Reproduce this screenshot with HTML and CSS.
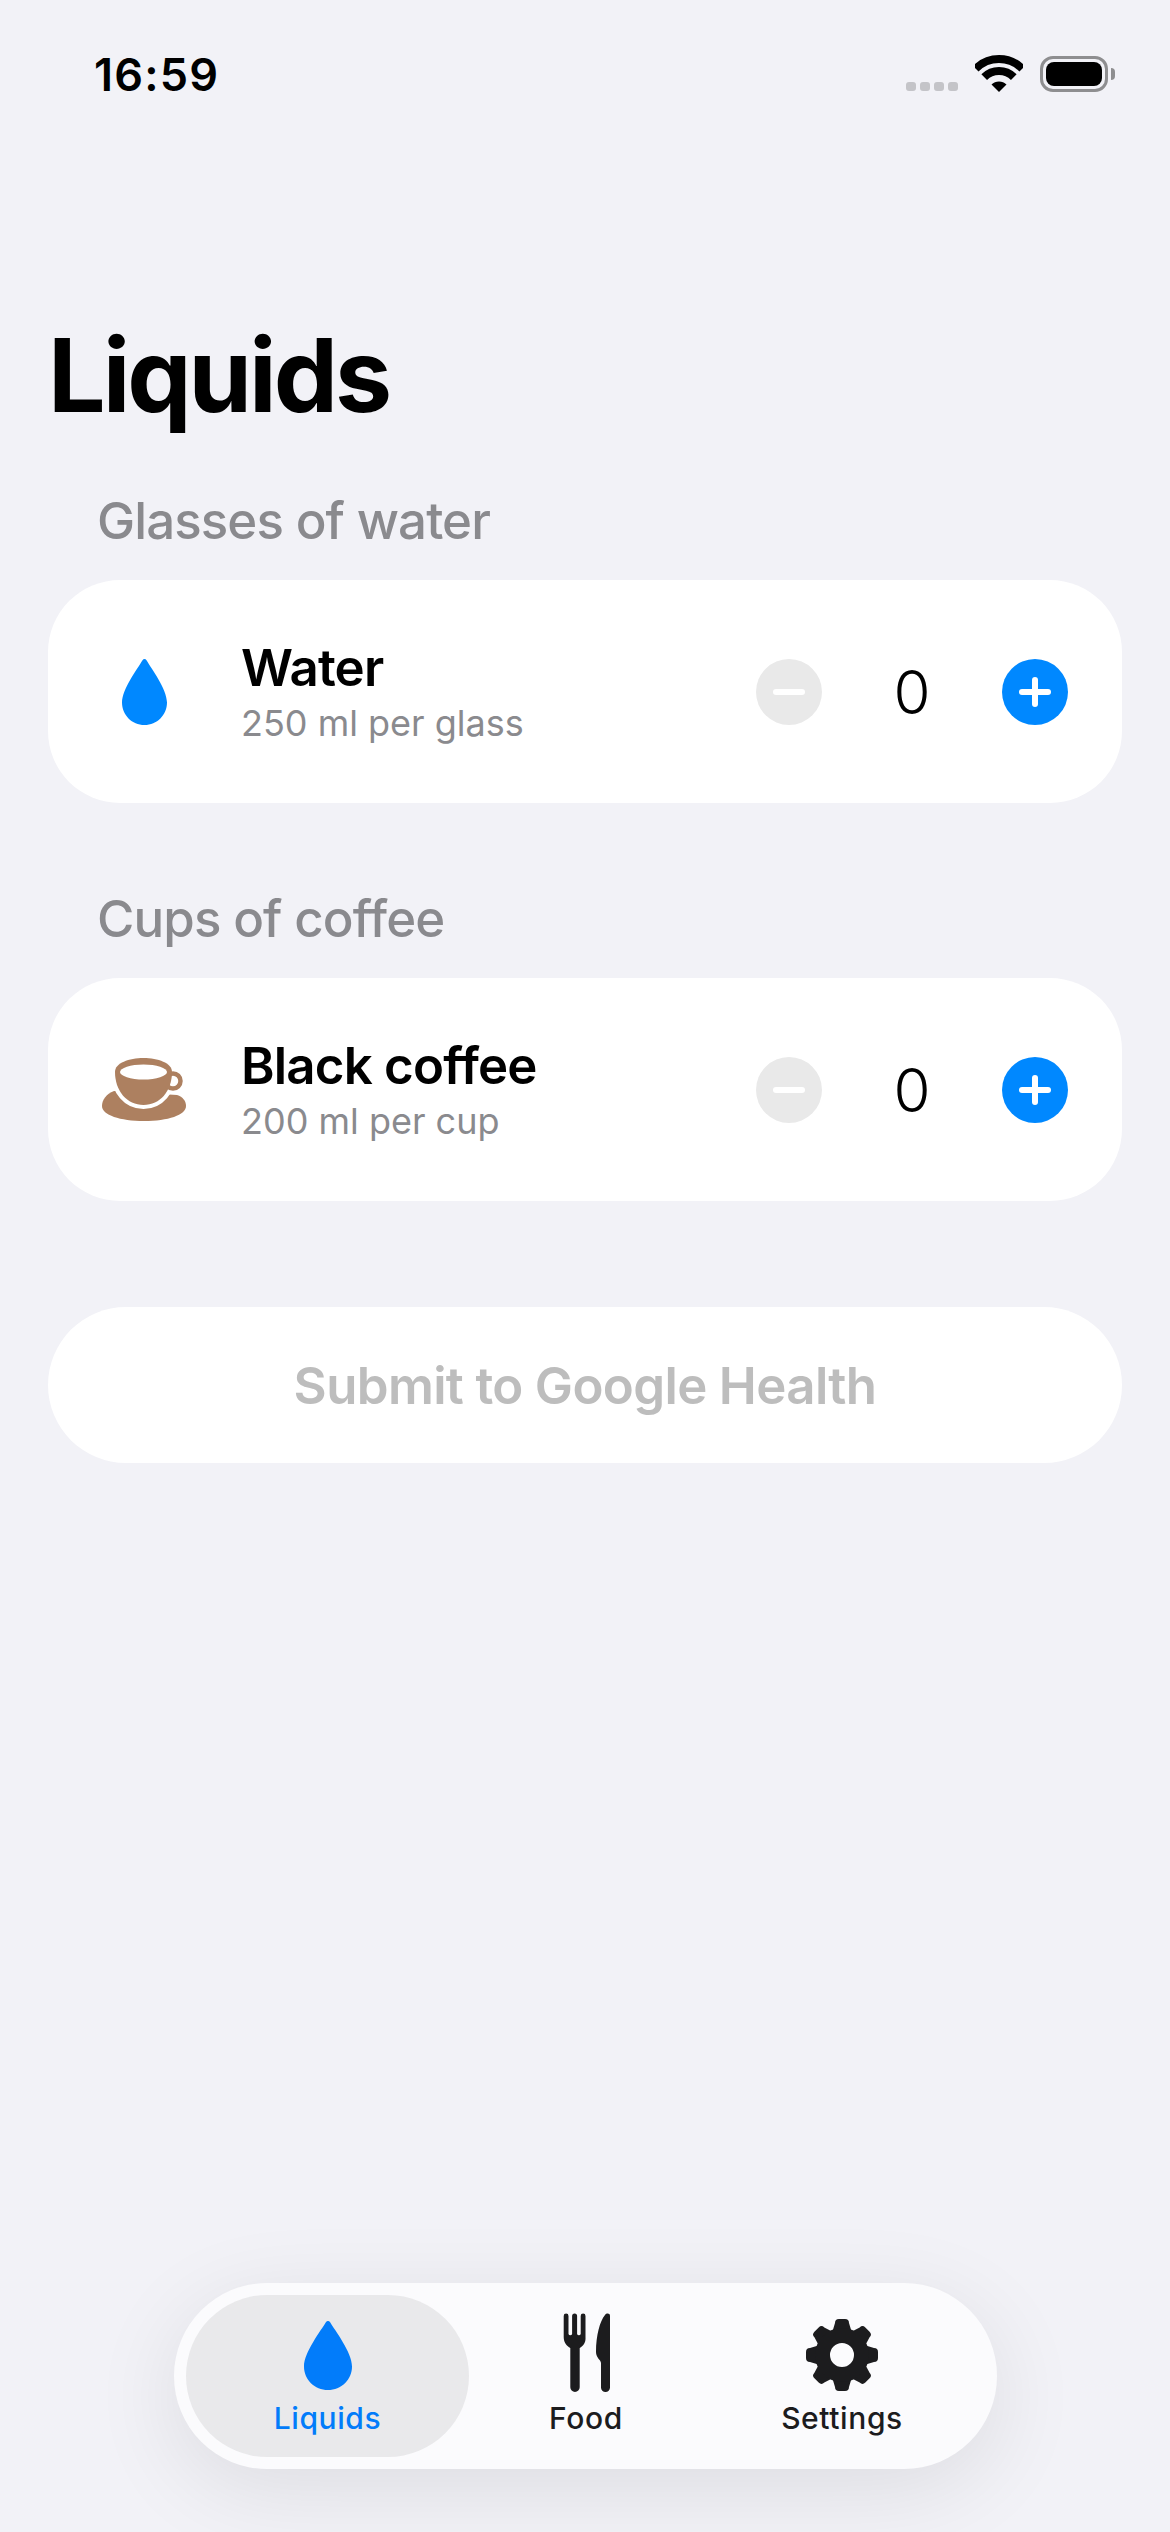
FILE: index.html
```html
<!DOCTYPE html>
<html lang="en">
  <head>
    <meta charset="UTF-8" />
    <meta name="viewport" content="width=device-width, initial-scale=1.0" />
    <title>Liquids</title>
    <link rel="stylesheet" href="styles.css">
  </head>
  <body>
    <div class="status-bar">
      <span class="time">16:59</span>
      <div class="status-icons">
        <div class="signal"><i></i><i></i><i></i><i></i></div>
        <svg class="wifi" viewBox="0 0 48 37">
          <path d="M.7 13.7A33 33 0 0 1 47.3 13.7" fill="none" stroke="#000" stroke-width="8" />
          <path d="M9.2 22.2A21 21 0 0 1 38.8 22.2" fill="none" stroke="#000" stroke-width="8" />
          <path d="M24 37L16.5 29.5A10.6 10.6 0 0 1 31.5 29.5Z" fill="#000" />
        </svg>
        <div class="battery"><div class="battery-level"></div></div>
      </div>
    </div>

    <h1 class="page-title">Liquids</h1>

    <div class="section-label">Glasses of water</div>
    <div class="card">
      <div class="item-icon">
        <svg class="drop" viewBox="0 0 45 66">
          <path d="M20.5 1.2C21.5-.4 23.5-.4 24.5 1.2C29 9 45 30 45 43.5C45 56 35 66 22.5 66C10 66 0 56 0 43.5C0 30 16 9 20.5 1.2Z" />
        </svg>
      </div>
      <div class="item-text">
        <div class="item-name">Water</div>
        <div class="item-size">250 ml per glass</div>
      </div>
      <div class="stepper">
        <button class="step step-minus"></button>
        <span class="count">0</span>
        <button class="step step-plus"></button>
      </div>
    </div>

    <div class="section-label section-label-next">Cups of coffee</div>
    <div class="card">
      <div class="item-icon">
        <svg class="cup" viewBox="0 0 84 63">
          <path d="M12 33C4 36 0 42 0 48C0 57 18 63 42 63C66 63 84 57 84 48C84 43 81 39 75 37Z" fill="#ad8060" />
          <path d="M13 14C13 5 27 0 41.5 0C56 0 70 5 70 14C70 33 58 47 41.5 47C25 47 13 33 13 14Z" fill="#ad8060" stroke="#fff" stroke-width="8" paint-order="stroke" />
          <circle cx="71" cy="23" r="7.5" fill="none" stroke="#ad8060" stroke-width="4.5" />
          <ellipse cx="41.5" cy="14" rx="23.5" ry="7.5" fill="#fff" />
        </svg>
      </div>
      <div class="item-text">
        <div class="item-name">Black coffee</div>
        <div class="item-size">200 ml per cup</div>
      </div>
      <div class="stepper">
        <button class="step step-minus"></button>
        <span class="count">0</span>
        <button class="step step-plus"></button>
      </div>
    </div>

    <button class="submit">Submit to Google Health</button>

    <nav class="tab-bar">
      <a class="tab tab-active">
        <svg class="tab-drop" viewBox="0 0 45 66" preserveAspectRatio="none">
          <path d="M20.5 1.2C21.5-.4 23.5-.4 24.5 1.2C29 9 45 30 45 43.5C45 56 35 66 22.5 66C10 66 0 56 0 43.5C0 30 16 9 20.5 1.2Z" />
        </svg>
        <span>Liquids</span>
      </a>
      <a class="tab">
        <svg class="tab-food" viewBox="0 0 47 79">
          <path d="M.7 3a2.4 2.4 0 0 1 4.8 0V21a1.9 1.9 0 0 0 3.6 0V3a2.5 2.5 0 0 1 5 0V21a1.9 1.9 0 0 0 3.6 0V3a2.4 2.4 0 0 1 4.8 0V24C23 30 20 33 16.7 35V74.3a4.7 4.7 0 0 1-9.4 0V35C4 33 .7 30 .7 24Z" />
          <path d="M47 3V74.5a4.5 4.5 0 0 1-9 0V50C38 47 33 45 33 39C33 22 37 8 42 2C43.5 0 47 0 47 3Z" />
        </svg>
        <span>Food</span>
      </a>
      <a class="tab tab-last">
        <svg class="tab-gear" viewBox="0 0 72 72">
          <defs>
            <path id="tooth" d="M29 4Q29 0 33 0H39Q43 0 43 4L46 14H26Z" />
          </defs>
          <use href="#tooth" />
          <use href="#tooth" transform="rotate(45 36 36)" />
          <use href="#tooth" transform="rotate(90 36 36)" />
          <use href="#tooth" transform="rotate(135 36 36)" />
          <use href="#tooth" transform="rotate(180 36 36)" />
          <use href="#tooth" transform="rotate(225 36 36)" />
          <use href="#tooth" transform="rotate(270 36 36)" />
          <use href="#tooth" transform="rotate(315 36 36)" />
          <path fill-rule="evenodd" d="M36 9A27 27 0 1 0 36 63A27 27 0 1 0 36 9ZM36 24A12 12 0 1 1 36 48A12 12 0 1 1 36 24Z" />
        </svg>
        <span>Settings</span>
      </a>
    </nav>
  </body>
</html>
```

FILE: styles.css
```css
body {
  font-family: Inter, "Liberation Sans", sans-serif;
  margin: 0;
  padding: 0 48px;
  background-color: #f2f2f7;
  width: 1170px;
  height: 2532px;
  box-sizing: border-box;
  display: flex;
  flex-direction: column;
  overflow: hidden;
}

.status-bar {
  height: 150px;
  display: flex;
  justify-content: space-between;
  padding: 48px 14px 0 46px;
  box-sizing: border-box;
  flex-shrink: 0;
}

.time {
  font-size: 45px;
  font-weight: 600;
  line-height: 54px;
  letter-spacing: 1.2px;
  color: #000;
}

.status-icons {
  display: flex;
  align-items: flex-start;
  padding-top: 7px;
}

.signal {
  display: flex;
  gap: 4px;
  margin-top: 27px;
  margin-right: 17px;
}

.signal i {
  width: 10px;
  height: 9px;
  border-radius: 3px;
  background-color: #c4c4c8;
}

.wifi {
  width: 48px;
  height: 37px;
  margin-right: 17px;
}

.battery {
  width: 68px;
  height: 36px;
  padding: 3px;
  border: 3px solid #8e8e90;
  border-radius: 13px;
  box-sizing: border-box;
  position: relative;
  margin-top: 1px;
}

.battery::after {
  content: "";
  position: absolute;
  right: -10px;
  top: 9px;
  width: 4px;
  height: 12px;
  border-radius: 0 6px 6px 0;
  background-color: #8e8e90;
}

.battery-level {
  width: 100%;
  height: 100%;
  border-radius: 8px;
  background-color: #000;
}

.page-title {
  margin: 13px 0 0;
  padding-top: 150px;
  height: 124px;
  font-size: 102px;
  font-weight: 700;
  line-height: 124px;
  letter-spacing: -3px;
  color: #000;
  flex-shrink: 0;
}

.section-label {
  font-size: 51px;
  font-weight: 500;
  line-height: 62px;
  letter-spacing: -0.9px;
  color: #8a8a8e;
  padding-left: 49px;
  margin-top: 53px;
  margin-bottom: 28px;
}

.section-label-next {
  margin-top: 85px;
}

.card {
  height: 223px;
  flex-shrink: 0;
  display: flex;
  align-items: center;
  padding: 0 54px;
  box-sizing: border-box;
  background-color: #fff;
  border-radius: 72px;
}

.item-icon {
  width: 84px;
  margin-right: 55px;
  display: flex;
  justify-content: center;
  flex-shrink: 0;
}

.drop {
  width: 45px;
  height: 66px;
  fill: #0088ff;
  margin-top: 1px;
}

.cup {
  width: 84px;
  height: 63px;
}

.item-text {
  flex: 1;
}

.item-name {
  font-size: 51px;
  font-weight: 600;
  line-height: 62px;
  letter-spacing: -0.8px;
  color: #000;
}

.item-size {
  font-size: 36px;
  line-height: 48px;
  color: #8a8a8e;
}

.stepper {
  display: flex;
  align-items: center;
}

.count {
  width: 180px;
  text-align: center;
  font-size: 60px;
  font-weight: 300;
  color: #000;
}

.step {
  width: 66px;
  height: 66px;
  padding: 0;
  border: none;
  border-radius: 50%;
  position: relative;
  flex-shrink: 0;
}

.step-minus {
  background-color: #e9e9e9;
}

.step-plus {
  background-color: #0088ff;
}

.step::before {
  content: "";
  position: absolute;
  left: 17px;
  top: 30px;
  width: 32px;
  height: 6px;
  border-radius: 3px;
  background-color: #fff;
}

.step-plus::after {
  content: "";
  position: absolute;
  left: 30px;
  top: 18px;
  width: 6px;
  height: 30px;
  border-radius: 3px;
  background-color: #fff;
}

.submit {
  height: 156px;
  flex-shrink: 0;
  margin-top: 106px;
  padding: 0;
  border: none;
  border-radius: 78px;
  background-color: #fff;
  font-family: inherit;
  font-size: 51px;
  font-weight: 600;
  letter-spacing: -0.65px;
  color: #bdbdbd;
}

.tab-bar {
  width: 823px;
  height: 186px;
  margin-top: auto;
  margin-bottom: 63px;
  margin-left: 126px;
  padding: 12px;
  box-sizing: border-box;
  display: flex;
  flex-shrink: 0;
  background-color: #fbfbfd;
  border-radius: 93px;
  box-shadow: 0 20px 90px rgba(0, 0, 0, 0.09);
}

.tab {
  display: flex;
  flex-direction: column;
  align-items: center;
  flex: none;
  width: 234px;
  position: relative;
  height: 162px;
  color: #1c1c1e;
  font-size: 30px;
  font-weight: 500;
  line-height: 36px;
  letter-spacing: 0.6px;
}

.tab span {
  position: absolute;
  top: 105px;
}

.tab svg {
  fill: #1c1c1e;
}

.tab-active {
  width: 283px;
  background-color: #e9e9eb;
  border-radius: 81px;
  color: #027cfa;
}

.tab-last {
  margin-left: 22px;
}

.tab .tab-drop {
  width: 48px;
  height: 69px;
  margin-top: 26px;
  fill: #027cfa;
}

.tab-food {
  width: 47px;
  height: 79px;
  margin-top: 18px;
}

.tab-gear {
  width: 72px;
  height: 72px;
  margin-top: 24px;
}
```
